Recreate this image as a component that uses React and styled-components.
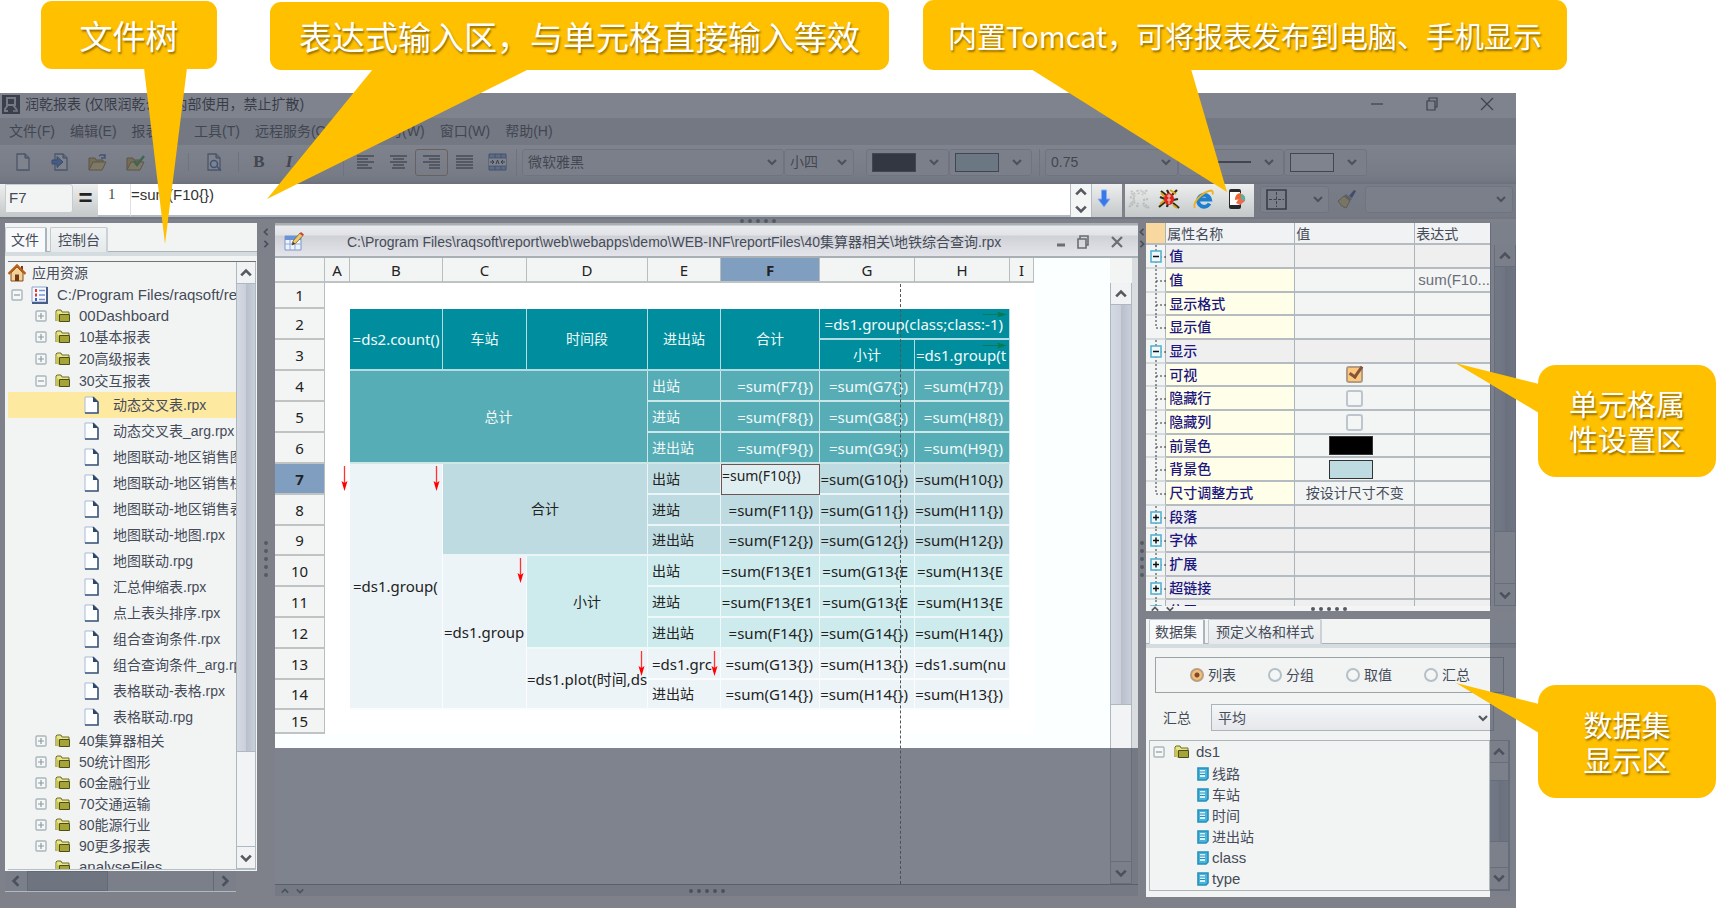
import React from 'react';
import styled, { createGlobalStyle, css } from 'styled-components';

const GlobalStyle = createGlobalStyle`
* { box-sizing: border-box; }
body {
    margin: 0;
    background: #fff;
    overflow: hidden;
    font-family: "Liberation Sans", "Noto Sans CJK SC", sans-serif;
    font-size: 14px;
    line-height: 20px;
    color: #454b58;
}
button, input, select { font: inherit; color: inherit; margin: 0; padding: 0; }
button { background: none; border: 0; }
ul { list-style: none; margin: 0; padding: 0; }
svg { display: block; flex: none; }
`

/* ---------- data ---------- */

const menus = ['文件(F)', '编辑(E)', '报表(R)', '工具(T)', '远程服务(O)', '在线学习(W)', '窗口(W)', '帮助(H)'];

const topFolders = ['10基本报表', '20高级报表', '30交互报表'];
const files = [
    '动态交叉表.rpx', '动态交叉表_arg.rpx', '地图联动-地区销售图.rpx', '地图联动-地区销售柱.rpx',
    '地图联动-地区销售表.rpx', '地图联动-地图.rpx', '地图联动.rpg', '汇总伸缩表.rpx', '点上表头排序.rpx',
    '组合查询条件.rpx', '组合查询条件_arg.rpx', '表格联动-表格.rpx', '表格联动.rpg',
];
const bottomFolders = ['40集算器相关', '50统计图形', '60金融行业', '70交通运输', '80能源行业', '90更多报表'];

const columns = [
    { name: 'A', width: 25 }, { name: 'B', width: 93 }, { name: 'C', width: 84 },
    { name: 'D', width: 121 }, { name: 'E', width: 73 }, { name: 'F', width: 99 },
    { name: 'G', width: 95 }, { name: 'H', width: 95 }, { name: 'I', width: 24 },
];

const sums = (tone, label, f, g, h) => [
    { text: label, tone, align: 'left', pad: 4 },
    { text: f, tone, align: 'right', pad: 6 },
    { text: g, tone, align: 'right', pad: 6 },
    { text: h, tone, align: 'right', pad: 6 },
];

const sheet = [
    { height: 26, cells: [{ span: 7 }] },
    {
        height: 31, cells: [
            { text: '=ds2.count()', tone: 'head', rows: 2 },
            { text: '车站', tone: 'head', rows: 2 },
            { text: '时间段', tone: 'head', rows: 2 },
            { text: '进出站', tone: 'head', rows: 2 },
            { text: '合计', tone: 'head', rows: 2 },
            { text: '=ds1.group(class;class:-1)', tone: 'head', span: 2, align: 'right', pad: 6, mark: 'right' },
        ],
    },
    { height: 31, cells: [{ text: '小计', tone: 'head' }, { text: '=ds1.group(t', tone: 'head', align: 'left', pad: 1, mark: 'right' }] },
    { height: 31, cells: [{ text: '总计', tone: 'total', span: 3, rows: 3 }, ...sums('total', '出站', '=sum(F7{})', '=sum(G7{})', '=sum(H7{})')] },
    { height: 31, cells: sums('total', '进站', '=sum(F8{})', '=sum(G8{})', '=sum(H8{})') },
    { height: 31, cells: sums('total', '进出站', '=sum(F9{})', '=sum(G9{})', '=sum(H9{})') },
    {
        height: 31, mark: 'down', cells: [
            { text: '=ds1.group(', tone: 'pale', rows: 8, align: 'left', pad: 3, mark: 'down' },
            { text: '合计', tone: 'sub', span: 2, rows: 3 },
            { text: '出站', tone: 'sub', align: 'left', pad: 4 },
            { text: '=sum(F10{})', editing: true },
            { text: '=sum(G10{})', tone: 'sub', align: 'right', pad: 6 },
            { text: '=sum(H10{})', tone: 'sub', align: 'right', pad: 6 },
        ],
    },
    { height: 31, cells: sums('sub', '进站', '=sum(F11{})', '=sum(G11{})', '=sum(H11{})') },
    { height: 30, cells: sums('sub', '进出站', '=sum(F12{})', '=sum(G12{})', '=sum(H12{})') },
    {
        height: 31, cells: [
            { text: '=ds1.group', tone: 'pale', rows: 5, align: 'left', pad: 1, mark: 'down' },
            { text: '小计', tone: 'mint', rows: 3 },
            ...sums('mint', '出站', '=sum(F13{E1', '=sum(G13{E', '=sum(H13{E'),
        ],
    },
    { height: 31, cells: sums('mint', '进站', '=sum(F13{E1', '=sum(G13{E', '=sum(H13{E') },
    { height: 31, cells: sums('mint', '进出站', '=sum(F14{})', '=sum(G14{})', '=sum(H14{})') },
    {
        height: 31, cells: [
            { text: '=ds1.plot(时间,ds', tone: 'pale', rows: 2, align: 'left', pad: 0, mark: 'down' },
            { text: '=ds1.grc', tone: 'pale', align: 'left', pad: 4, mark: 'down' },
            { text: '=sum(G13{})', tone: 'pale', align: 'right', pad: 6 },
            { text: '=sum(H13{})', tone: 'pale', align: 'right', pad: 6 },
            { text: '=ds1.sum(nu', tone: 'pale', align: 'right', pad: 3 },
        ],
    },
    { height: 30, cells: sums('pale', '进出站', '=sum(G14{})', '=sum(H14{})', '=sum(H13{})') },
    { height: 24, cells: [{ span: 7 }] },
];

const properties = [
    { name: '值', kind: 'open' },
    { name: '值', kind: 'leaf', expr: 'sum(F10...' },
    { name: '显示格式', kind: 'leaf' },
    { name: '显示值', kind: 'last' },
    { name: '显示', kind: 'open' },
    { name: '可视', kind: 'leaf', check: true, checked: true },
    { name: '隐藏行', kind: 'leaf', check: true },
    { name: '隐藏列', kind: 'leaf', check: true },
    { name: '前景色', kind: 'leaf', color: '#000' },
    { name: '背景色', kind: 'leaf', color: '#bddbe0' },
    { name: '尺寸调整方式', kind: 'last', value: '按设计尺寸不变' },
    { name: '段落', kind: 'closed' },
    { name: '字体', kind: 'closed' },
    { name: '扩展', kind: 'closed' },
    { name: '超链接', kind: 'closed' },
    { name: '位置', kind: 'closed' },
];

const fields = ['线路', '车站', '时间', '进出站', 'class', 'type'];
const isLatin = (text) => /^[\x20-\x7e]+$/.test(text);

/* ---------- icons ---------- */

const Chevron = ({ up, left, right, size = 10, color = '#555a60' }) => {
    const turn = up ? 180 : left ? 90 : right ? -90 : 0;
    return (
        <svg width={size} height={size} viewBox="0 0 10 10">
            <path d="M1 3l4 4 4-4" fill="none" stroke={color} strokeWidth="2.2" transform={`rotate(${turn} 5 5)`} />
        </svg>
    )
}

const Toggle = ({ open }) => (
    <svg width="12" height="12" viewBox="0 0 12 12">
        <rect x="1" y="1" width="10" height="10" rx="1" fill="#f6f8f8" stroke="#a9b6bb" strokeWidth="1.4" />
        <path d={open ? 'M3 6h6' : 'M3 6h6M6 3v6'} stroke="#8d9ba1" strokeWidth="1.2" />
    </svg>
)

const FolderIcon = () => (
    <svg width="16" height="14" viewBox="0 0 16 14">
        <path d="M1 12V2l1-1h4l1 2h7v2" fill="#e6e58c" stroke="#6e6d24" />
        <path d="M4.5 5.500h10v7h-10z" fill="#a5a439" stroke="#4d4c1b" />
        <path d="M1 3l3 3v7l-3-2z" fill="#c5c454" />
    </svg>
)

const FileIcon = () => (
    <svg width="15" height="18" viewBox="0 0 15 18">
        <path d="M1 1h8l5 5v11H1z" fill="#fdfeff" stroke="#a9b9da" />
        <path d="M9 1l5 5v11H1" fill="none" stroke="#3f5878" strokeWidth="1.6" />
        <path d="M9 1v5h5z" fill="#2f4766" />
    </svg>
)

const FieldIcon = () => (
    <svg width="12" height="14" viewBox="0 0 12 14">
        <path d="M1 1h10v10l-2 2H1z" fill="#46b4dc" stroke="#2690ba" strokeWidth="1.6" />
        <path d="M3 3h5v7H3z" fill="#d8f1fa" />
        <path d="M3 5h5M3 7.500h5" stroke="#2690ba" />
    </svg>
)

const HomeIcon = () => (
    <svg width="18" height="18" viewBox="0 0 18 18">
        <path d="M3 9v8h12V9L9 3z" fill="#f3cf9a" stroke="#8a4b12" />
        <path d="M13 2h2v5h-2z" fill="#8a2f12" />
        <path d="M0.5 10L9 1.500l8.500 8.500" fill="none" stroke="#b4611b" strokeWidth="2.4" />
        <path d="M7 10.500h4V17H7z" fill="#6e3c10" />
    </svg>
)

const ListIcon = () => (
    <svg width="18" height="18" viewBox="0 0 18 18">
        <path d="M1 1h15v15H1z" fill="#f5f8ff" stroke="#8fa4cb" />
        <path d="M16 1v16H1" fill="none" stroke="#4a5d86" strokeWidth="2" />
        <path d="M4 3h2v3H4zM4 7.500h2v3H4z" fill="#e23b2e" />
        <path d="M4 12h2v3H4z" fill="#2d5fd0" />
        <path d="M8 4.500h6M8 9h6M8 13.500h6" stroke="#7b95cb" strokeWidth="1.4" />
    </svg>
)

const LogoIcon = () => (
    <svg width="18" height="19" viewBox="0 0 18 19">
        <path d="M0 0h18v19H0z" fill="#1b1d24" />
        <path d="M5 3h8v7H5z" fill="none" stroke="#ddd" strokeWidth="2" />
        <path d="M6 10l-3 4v2h3M11 10l4 5" fill="none" stroke="#ddd" strokeWidth="2" />
        <path d="M11 16h5" stroke="#ddd" strokeWidth="1.5" />
    </svg>
)

const SheetIcon = () => (
    <svg width="20" height="20" viewBox="0 0 20 20">
        <path d="M1 4h16v14H1z" fill="#eef4ff" stroke="#7b96c8" />
        <path d="M1 4h16v4H1z" fill="#6b93d8" />
        <path d="M1 12h16M6 8v10M11 8v10" stroke="#8fa9d8" />
        <path d="M8 13l1-4 7-8 3 2.500-7.500 8z" fill="#f0c96a" stroke="#7a6230" strokeWidth="0.8" />
        <path d="M15.500 1.500L17 0l3 2.500-1.500 1.500z" fill="#c9443a" />
        <path d="M8 13l1-3 2 1.500z" fill="#333" />
    </svg>
)

const PageIcon = ({ arrow, glass }) => (
    <svg width="18" height="18" viewBox="0 0 18 18">
        <path d="M4 1h8l4 4v12H4z" fill="#fff" stroke="#51698f" strokeWidth="1.3" />
        <path d="M12 1v4h4" fill="#9fb4d6" stroke="#2f4766" />
        {arrow && <path d="M1 7h5V3.500l6 5.500-6 5.500V11H1z" fill="#3f7ee0" stroke="#1c469e" />}
        {glass && <g fill="none" stroke="#2c5fa8" strokeWidth="1.6"><circle cx="10" cy="11" r="3.5" /><path d="M13 13.500l4 4" /></g>}
    </svg>
)

const OpenIcon = ({ check }) => (
    <svg width="20" height="19" viewBox="0 0 20 19">
        <path d="M1 17V5h6l1 2h7v3" fill="#e2b64b" stroke="#8a651a" />
        <path d="M1 17l4-8h13l-4 8z" fill="#f8dc7d" stroke="#8a651a" />
        {check
            ? <path d="M8 8l3 4 7-9" fill="none" stroke="#2c9a3d" strokeWidth="2.4" />
            : <path d="M11 3q4-3 6 1M17 1v4h-4" fill="none" stroke="#3864a8" strokeWidth="1.4" />}
    </svg>
)

const lineSets = {
    left: 'M0 2h17M0 5h11M0 8h17M0 11h11M0 14h15',
    center: 'M0 2h17M3 5h11M0 8h17M3 11h11M2 14h13',
    right: 'M0 2h17M6 5h11M0 8h17M6 11h11M6 14h11',
    justify: 'M0 2h17M0 5h17M0 8h17M0 11h17M0 14h17',
};
const AlignIcon = ({ kind }) => (
    <svg width="17" height="16" viewBox="0 0 17 16"><path d={lineSets[kind]} stroke="#444" strokeWidth="1.6" /></svg>
)

const MergeIcon = () => (
    <svg width="19" height="18" viewBox="0 0 19 18">
        <path d="M1 1h17v16H1z" fill="#8fb0e6" stroke="#39588c" />
        <path d="M1 5h17M1 13h17M7 1v4M13 1v4M7 13v4M13 13v4" stroke="#39588c" />
        <path d="M1 5.500h17v7H1z" fill="#fff" />
        <path d="M2 9h4M17 9h-4M4 7l2 2-2 2M15 7l-2 2 2 2M8 11l1.500-4 1.500 4" fill="none" stroke="#111" />
    </svg>
)

const DownArrow = () => (
    <svg width="14" height="19" viewBox="0 0 14 19">
        <path d="M4.500 1h5v9H13l-6 8-6-8h3.500z" fill="#3a78ea" stroke="#8aaef0" />
    </svg>
)

const BugIcon = ({ faded }) => (
    <svg width="22" height="22" viewBox="0 0 22 22" opacity={faded ? 0.3 : 1}>
        <path
            d="M3 3l5 4M9 2l2 4M19 2l-5 5M2 9l5 2M1 19l6-5M20 11l-5 1M21 20l-6-5M9 19l1-4"
            stroke={faded ? '#777' : '#2b2b16'} strokeWidth="2.2" strokeDasharray={faded ? '2 1' : 'none'}
        />
        <path d="M12 2l6 4M2 16l5-4M15 17l4 3M3 5l4 4" stroke={faded ? '#999' : '#d9a520'} strokeWidth="2" />
        <ellipse cx="11" cy="11" rx="5" ry="6" fill={faded ? 'none' : '#d9251d'} />
        {!faded && <path d="M9 8h4M11 6v10M9 12h4" stroke="#ffc9bd" />}
    </svg>
)

const BrowserIcon = () => (
    <svg width="21" height="21" viewBox="0 0 21 21">
        <path d="M16.500 14.500A6 6 0 1 1 17 10.500H7" fill="none" stroke="#1f7fcf" strokeWidth="3.8" />
        <path d="M2 19C-1 14 9 3 18 1.500q2.500 0 1.500 4" fill="none" stroke="#efb021" strokeWidth="1.8" />
    </svg>
)

const PhoneIcon = () => (
    <svg width="18" height="22" viewBox="0 0 18 22">
        <rect x="1" y="1" width="12" height="20" rx="2" fill="#26282c" />
        <path d="M2 4h10v13H2z" fill="#fff" />
        <path d="M13 5a6 6 0 0 0-6 7l6-1z" fill="#f0622e" />
        <path d="M8 15l6-9q4 2 3 7l-5 4z" fill="#ef6a48" />
        <path d="M13 6q5 1 4 7l-4-2z" fill="#4cb7a5" />
    </svg>
)

const GridIcon = () => (
    <svg width="21" height="21" viewBox="0 0 21 21">
        <path d="M1 1h19v19H1z" fill="none" stroke="#111" strokeWidth="1.6" />
        <path d="M10.500 3v15M3 10.500h15" stroke="#222" strokeDasharray="3 1.5" />
    </svg>
)

const BrushIcon = () => (
    <svg width="20" height="20" viewBox="0 0 20 20">
        <path d="M12 7l5-6 2 1-4 7z" fill="#2f4a9c" />
        <path d="M9 5l6 5-2 2-6-5z" fill="#888" />
        <path d="M7 7l6 5-4 7q-5-1-8-7z" fill="#e8cf76" stroke="#93783a" />
    </svg>
)

const WindowIcon = ({ kind, bold }) => (
    <svg width="14" height="14" viewBox="0 0 14 14" fill="none" stroke={bold ? '#6a6d73' : '#222'} strokeWidth={bold ? 2.2 : 1.2}>
        {kind === 'min' && <path d={bold ? 'M3 10h8' : 'M1 7h12'} strokeWidth={bold ? 3 : 1.2} />}
        {kind === 'restore' && <path d="M2 4h8v9H2zM4 4V1h8v9h-2" strokeWidth={bold ? 1.6 : 1.2} />}
        {kind === 'close' && <path d={bold ? 'M2 2l10 10M12 2L2 12' : 'M1 1l12 12M13 1L1 13'} />}
    </svg>
)

const PropertyLines = ({ kind }) => (
    <svg width="21" height="24" viewBox="0 0 21 24">
        <path d={`M10 0V${kind === 'last' ? 12 : 24}M10 12h11`} stroke="#333" strokeDasharray="2 2" fill="none" />
        {(kind === 'open' || kind === 'closed') && (
            <g>
                <rect x="5" y="6" width="10" height="11" fill="#eef8fb" stroke="#58b2d0" strokeWidth="1.6" />
                <path d={kind === 'open' ? 'M7 11.500h6' : 'M7 11.500h6M10 8.500v6'} stroke="#111" strokeWidth="1.5" />
            </g>
        )}
    </svg>
)

const Mark = ({ kind }) => (
    kind === 'down'
        ? <svg width="7" height="26" viewBox="0 0 7 26"><path d="M3.500 0v18" stroke="#f33" strokeWidth="1.3" /><path d="M0.5 15l3 2 3-2-3 10z" fill="#f00" /></svg>
        : <svg width="24" height="7" viewBox="0 0 24 7"><path d="M0 3.500h17" stroke="#0a7a55" /><path d="M14 0.5l2 3-2 3 10-3z" fill="#087a4c" /></svg>
)

/* ---------- shell ---------- */

const App = () => {
    return (
        <Page>
            <GlobalStyle />
            <Window>
                <TopBars>
                    <TitleBar>
                        <LogoIcon />
                        <AppName>润乾报表 (仅限润乾公司内部使用，禁止扩散)</AppName>
                        <WindowButton aria-label="最小化"><WindowIcon kind="min" /></WindowButton>
                        <WindowButton aria-label="还原"><WindowIcon kind="restore" /></WindowButton>
                        <WindowButton aria-label="关闭"><WindowIcon kind="close" /></WindowButton>
                    </TitleBar>
                    <MenuBar>
                        {menus.map((name) => <button key={name}>{name}</button>)}
                    </MenuBar>
                    <Toolbar />
                    <Shade />
                </TopBars>
                <FormulaBar />
                <Splitter><Dots /></Splitter>
                <Workspace>
                    <FilePanel />
                    <Gutter $width={18}><GutterMarks /></Gutter>
                    <ReportWindow />
                    <Gutter $width={8}><GutterMarks /></Gutter>
                    <RightColumn>
                        <PropertyPanel />
                        <DatasetPanel />
                    </RightColumn>
                </Workspace>
            </Window>
            <Callout text={['文件树']} left={41} top={1} width={176} height={68} points="103,67 146,67 124,243" size={33} />
            <Callout text={['表达式输入区，与单元格直接输入等效']} left={270} top={2} width={619} height={68} points="103,67 259,67 -3,197" size={33} />
            <Callout text={['内置Tomcat，可将报表发布到电脑、手机显示']} left={923} top={0} width={644} height={70} points="108,69 268,69 304,192" size={29} />
            <Callout text={['单元格属', '性设置区']} right={0} top={365} width={178} height={112} points="1,19 1,48 -83,-2" size={29} round={18} />
            <Callout text={['数据集', '显示区']} right={0} top={685} width={178} height={113} points="1,19 1,48 -82,-2" size={29} round={18} />
        </Page>
    )
}

const Callout = ({ text, points, ...place }) => (
    <CalloutBox $place={place}>
        <Pointer width="1" height="1"><polygon points={points} fill="#ffc000" /></Pointer>
        {text.map((line) => <span key={line}>{line}</span>)}
    </CalloutBox>
)

const GutterMarks = () => (
    <>
        <GutterArrows>
            <Chevron left size={8} color="#4b4f59" />
            <Chevron right size={8} color="#4b4f59" />
        </GutterArrows>
        <Dots vertical />
    </>
)

const Dots = ({ vertical }) => (
    <DotRow $vertical={vertical}><i /><i /><i /><i /><i /></DotRow>
)

const Combo = ({ label, value, width, flex }) => (
    <ComboBox $width={width} $flex={flex}>
        <select aria-label={label} defaultValue={value}><option>{value}</option></select>
        <Chevron />
    </ComboBox>
)

const ColorCombo = ({ label, color }) => (
    <ColorButton aria-label={label}>
        <Swatch $color={color} />
        <Chevron />
    </ColorButton>
)

const Toolbar = () => (
    <ToolRow>
        <ToolGroup $start={3} $pitch={38}>
            <button aria-label="新建"><PageIcon /></button>
            <button aria-label="导入"><PageIcon arrow /></button>
            <button aria-label="打开"><OpenIcon /></button>
            <button aria-label="保存"><OpenIcon check /></button>
        </ToolGroup>
        <ToolGroup $start={39} $pitch={38} $line>
            <button aria-label="预览"><PageIcon glass /></button>
        </ToolGroup>
        <ToolGroup $start={12} $pitch={30} $line>
            <Letter aria-label="加粗">B</Letter>
            <Letter aria-label="倾斜" $italic>I</Letter>
            <Letter aria-label="下划线">U</Letter>
        </ToolGroup>
        <ToolGroup $start={15} $pitch={33} $line>
            <button aria-label="左对齐"><AlignIcon kind="left" /></button>
            <button aria-label="居中"><AlignIcon kind="center" /></button>
            <Pressed aria-label="右对齐"><AlignIcon kind="right" /></Pressed>
            <button aria-label="两端对齐"><AlignIcon kind="justify" /></button>
            <button aria-label="合并单元格"><MergeIcon /></button>
        </ToolGroup>
        <ToolGroup $start={8} $line>
            <Combo label="字体" value="微软雅黑" width={262} />
            <Combo label="字号" value="小四" width={70} />
        </ToolGroup>
        <ToolGroup $start={12}>
            <ColorCombo label="前景色" color="#000" />
            <ColorCombo label="背景色" color="#bddbe0" />
        </ToolGroup>
        <ToolGroup $start={13} $line>
            <Combo label="线宽" value="0.75" width={133} />
            <LineButton aria-label="线型"><hr /><Chevron /></LineButton>
            <ColorCombo label="边框色" color="#fff" />
        </ToolGroup>
    </ToolRow>
)

const FormulaBar = () => (
    <FormulaRow>
        <CellName aria-label="单元格" defaultValue="F7" />
        <Equals>=</Equals>
        <LineNumber>1</LineNumber>
        <FormulaInput aria-label="表达式" defaultValue="=sum(F10{})" />
        <Stepper>
            <button aria-label="上一行"><Chevron up size={12} /></button>
            <button aria-label="下一行"><Chevron size={12} /></button>
        </Stepper>
        <ApplyButton aria-label="展开"><DownArrow /></ApplyButton>
        <PublishGroup>
            <button aria-label="停止"><BugIcon faded /></button>
            <button aria-label="服务"><BugIcon /></button>
            <button aria-label="浏览器"><BrowserIcon /></button>
            <button aria-label="手机"><PhoneIcon /></button>
        </PublishGroup>
        <BorderTools>
            <BorderButton aria-label="边框"><GridIcon /><Chevron /></BorderButton>
            <BrushButton aria-label="格式刷"><BrushIcon /></BrushButton>
            <Combo label="样式" value="" flex />
            <Shade />
        </BorderTools>
    </FormulaRow>
)

const FilePanel = () => (
    <LeftColumn>
        <BrightPanel>
            <Tabs>
                <Tab $active>文件</Tab>
                <Tab>控制台</Tab>
            </Tabs>
            <TreeFrame>
                <Tree>
                    <TreeRow $height={22} $indent={0} $gap={6}><HomeIcon /><span>应用资源</span></TreeRow>
                    <TreeRow $indent={3} $gap={8} $latin><Toggle open /><ListIcon /><span>C:/Program Files/raqsoft/report</span></TreeRow>
                    <FolderRow name="00Dashboard" />
                    {topFolders.map((name) => <FolderRow key={name} name={name} height={22} open={name.startsWith('30')} />)}
                    {files.map((name, i) => (
                        <TreeRow key={name} $height={26} $indent={76} $gap={14} $selected={i === 0}>
                            <FileIcon /><span>{name}</span>
                        </TreeRow>
                    ))}
                    {bottomFolders.map((name) => <FolderRow key={name} name={name} />)}
                    <FolderRow name="analyseFiles" bare />
                </Tree>
                <Scroll thumb={469} track={94} width={20} />
            </TreeFrame>
        </BrightPanel>
        <HorizontalScroll>
            <button aria-label="向左"><Chevron left size={12} /></button>
            <i />
            <b />
            <button aria-label="向右"><Chevron right size={12} /></button>
            <Shade />
        </HorizontalScroll>
    </LeftColumn>
)

const FolderRow = ({ name, height, open, bare }) => (
    <TreeRow $height={height} $indent={bare ? 47 : 27} $gap={8} $latin={isLatin(name)}>
        {!bare && <Toggle open={open} />}
        <FolderIcon />
        <span>{name}</span>
    </TreeRow>
)

const Scroll = ({ thumb, track, width }) => (
    <ScrollColumn $width={width}>
        <button aria-label="向上"><Chevron up size={12} /></button>
        <ScrollPart $grow={thumb} $fill />
        <ScrollPart $grow={track} />
        <button aria-label="向下"><Chevron size={12} /></button>
    </ScrollColumn>
)

const SheetCell = ({ cell }) => (
    cell.editing
        ? <EditingCell><input aria-label="F7" defaultValue={cell.text} /></EditingCell>
        : (
            <Cell
                $tone={cell.tone} $align={cell.align} $pad={cell.pad}
                $formula={cell.text?.startsWith('=')}
                colSpan={cell.span} rowSpan={cell.rows}
            >
                {cell.text}
                {cell.mark && <MarkSpot><Mark kind={cell.mark} /></MarkSpot>}
            </Cell>
        )
)

const ReportWindow = () => (
    <Report>
        <ReportTitle>
            <SheetIcon />
            <ReportPath>C:\Program Files\raqsoft\report\web\webapps\demo\WEB-INF\reportFiles\40集算器相关\地铁综合查询.rpx</ReportPath>
            <ReportButtons>
                <button aria-label="最小化"><WindowIcon kind="min" bold /></button>
                <button aria-label="还原"><WindowIcon kind="restore" bold /></button>
                <button aria-label="关闭"><WindowIcon kind="close" bold /></button>
            </ReportButtons>
        </ReportTitle>
        <ReportBody>
            <SheetArea>
                <Sheet>
                    <colgroup>
                        <col style={{ width: 50 }} />
                        {columns.map((c) => <col key={c.name} style={{ width: c.width }} />)}
                    </colgroup>
                    <thead>
                        <tr>
                            <ColumnHead />
                            {columns.map((c) => <ColumnHead key={c.name} scope="col" $active={c.name === 'F'}>{c.name}</ColumnHead>)}
                        </tr>
                    </thead>
                    <tbody>
                        {sheet.map((row, i) => (
                            <SheetRow key={i} $height={row.height}>
                                <RowHead scope="row" $active={i === 6}>{i + 1}</RowHead>
                                <Cell>{row.mark && <MarkSpot><Mark kind={row.mark} /></MarkSpot>}</Cell>
                                {row.cells.map((cell, n) => <SheetCell key={n} cell={cell} />)}
                                <Cell />
                            </SheetRow>
                        ))}
                    </tbody>
                </Sheet>
                <PageBreak />
            </SheetArea>
            <SheetScroll>
                <Scroll thumb={400} track={156} width={22} />
            </SheetScroll>
        </ReportBody>
        <ReportFoot>
            <Chevron up size={8} />
            <Chevron size={8} />
            <Dots />
        </ReportFoot>
        <Shade $height={148} />
    </Report>
)

const PropertyPanel = () => (
    <PropertyBox>
        <PropertyBody>
            <PropertyTable>
                <colgroup>
                    <col style={{ width: 21 }} />
                    <col style={{ width: 131 }} />
                    <col style={{ width: 121 }} />
                    <col />
                </colgroup>
                <thead>
                    <tr><th aria-label="层次" /><th>属性名称</th><th>值</th><th>表达式</th></tr>
                </thead>
                <tbody>
                    {properties.map((p, i) => (
                        <PropertyRow key={i} $group={p.kind === 'open' || p.kind === 'closed'}>
                            <td><PropertyLines kind={p.kind} /></td>
                            <th scope="row">{p.name}</th>
                            <td>
                                {p.check && <CheckBox type="checkbox" aria-label={p.name} defaultChecked={p.checked} />}
                                {p.color && <Swatch $color={p.color} $center />}
                                {p.value}
                            </td>
                            <td>{p.expr}</td>
                        </PropertyRow>
                    ))}
                </tbody>
            </PropertyTable>
            <PropertyScroll>
                <Scroll thumb={265} track={51} width={22} />
            </PropertyScroll>
        </PropertyBody>
        <PropertyFoot>
            <Chevron up size={8} />
            <Chevron size={8} />
            <Dots />
        </PropertyFoot>
        <Shade $width={26} />
    </PropertyBox>
)

const DatasetPanel = () => (
    <DatasetBox>
        <Tabs $tight>
            <Tab $active>数据集</Tab>
            <Tab>预定义格和样式</Tab>
        </Tabs>
        <RadioFrame>
            {['列表', '分组', '取值', '汇总'].map((name, i) => (
                <label key={name}><input type="radio" name="mode" defaultChecked={i === 0} />{name}</label>
            ))}
        </RadioFrame>
        <SummaryRow>
            <label htmlFor="summary">汇总</label>
            <SummarySelect>
                <select id="summary" defaultValue="平均"><option>平均</option></select>
                <Chevron />
            </SummarySelect>
        </SummaryRow>
        <FieldFrame>
            <Tree>
                <TreeRow $height={22} $indent={3} $gap={6} $latin><Toggle open /><FolderGap><FolderIcon /></FolderGap><span>ds1</span></TreeRow>
                {fields.map((name) => (
                    <TreeRow key={name} $indent={47} $gap={3} $latin={isLatin(name)}><FieldIcon /><span>{name}</span></TreeRow>
                ))}
            </Tree>
            <ScrollColumn $width={20}>
                <button aria-label="向上"><Chevron up size={12} /></button>
                <ScrollPart $grow={18} />
                <ScrollPart $grow={61} $fill />
                <ScrollPart $grow={26} />
                <button aria-label="向下"><Chevron size={12} /></button>
            </ScrollColumn>
        </FieldFrame>
        <Shade $width={26} />
    </DatasetBox>
)

/* ---------- styles ---------- */

const Page = styled.div`
position: relative;
display: flex;
height: 100vh;
padding: 93px 200px 0 0;
`

const Window = styled.div`
flex: 1;
min-width: 0;
display: flex;
flex-direction: column;
background: #7e818a;
`

const Shade = styled.div`
position: absolute;
right: 0;
bottom: 0;
width: ${(p) => (p.$width ? `${p.$width}px` : '100%')};
height: ${(p) => (p.$height ? `${p.$height}px` : '100%')};
background: rgba(73, 79, 92, 0.7);
pointer-events: none;
`

const TopBars = styled.header`
position: relative;
flex: none;
color: #333;
`

const TitleBar = styled.div`
display: flex;
align-items: center;
height: 25px;
padding: 0 2px 3px 2px;
background: #fff;
`

const AppName = styled.span`
flex: 1;
margin-left: 5px;
color: #111;
`

const WindowButton = styled.button`
display: flex;
justify-content: center;
width: 55px;
`

const MenuBar = styled.nav`
display: flex;
align-items: center;
gap: 15px;
height: 27px;
padding: 0 0 2px 9px;
background: #d6d9dd;
`

const ToolRow = styled.div`
display: flex;
align-items: center;
height: 39px;
padding-bottom: 3px;
background: linear-gradient(#fdfdfd, #e3e5e8 80%, #cfd3d8);
border-bottom: 2px solid #c2c6cc;
`

const ToolGroup = styled.div`
display: flex;
align-items: center;
margin-left: ${(p) => p.$start}px;
position: relative;
> button {
    display: flex;
    align-items: center;
    justify-content: center;
    ${(p) => p.$pitch && css`width: ${p.$pitch}px;`}
}
${(p) => p.$line && css`
&::before {
    content: '';
    position: absolute;
    left: -6px;
    top: 0;
    width: 1px;
    height: 100%;
    background: #c6c9cd;
}
`}
`

const Letter = styled.button`
font-family: "Liberation Serif", serif;
font-weight: bold;
font-size: 17px;
font-style: ${(p) => (p.$italic ? 'italic' : 'normal')};
`

const Pressed = styled.button`
height: 27px;
border: 1px solid #b78a62;
border-radius: 3px;
`

const boxed = css`
height: 27px;
border: 1px solid #c9ced4;
border-radius: 3px;
background: #f1f2f3;
`

const ComboBox = styled.div`
${boxed}
display: flex;
align-items: center;
width: ${(p) => (p.$flex ? 'auto' : `${p.$width}px`)};
flex: ${(p) => (p.$flex ? 1 : 'none')};
padding: 0 6px 0 5px;
select {
    flex: 1;
    min-width: 0;
    appearance: none;
    border: 0;
    background: none;
}
`

const ColorButton = styled.button`
${boxed}
width: 83px;
padding: 0 4px 0 0;
gap: 13px;
`

const LineButton = styled.button`
${boxed}
width: 106px;
gap: 13px;
padding-left: 3px;
hr {
    width: 60px;
    margin: 0;
    border: 0;
    border-top: 2px solid #333;
}
`

const Swatch = styled.span`
display: block;
width: 44px;
height: 19px;
margin: ${(p) => (p.$center ? '0 0 0 34px' : '0')};
border: 1px solid #333;
background: ${(p) => p.$color};
`

const FormulaRow = styled.div`
display: flex;
flex: none;
height: 33px;
padding-left: 5px;
background: linear-gradient(#eeefef, #c4c8c9);
`

const CellName = styled.input`
width: 68px;
height: 29px;
padding: 0 0 2px 3px;
font-size: 15px;
border: 1px solid #c6ccd2;
border-radius: 0 3px 3px 0;
background: #f2f4f4;
`

const Equals = styled.span`
width: 25px;
text-align: center;
line-height: 28px;
font-size: 24px;
font-weight: bold;
color: #222;
`

const LineNumber = styled.span`
width: 33px;
padding-left: 10px;
background: #fff;
border-right: 1px solid #dde1e5;
border-bottom: 2px solid #b4bbc0;
font-family: "Liberation Serif", serif;
font-size: 15px;
`

const FormulaInput = styled.input`
flex: 1;
min-width: 0;
padding: 0 0 9px 0;
border: 0;
border-bottom: 2px solid #b4bbc0;
font-size: 15px;
color: #333;
background: #fff;
`

const Stepper = styled.div`
display: flex;
flex-direction: column;
width: 22px;
border-left: 1px solid #b4bbc0;
border-right: 1px solid #b4bbc0;
background: #f4f6f6;
button {
    flex: 1;
    display: flex;
    align-items: center;
    justify-content: center;
}
`

const ApplyButton = styled.button`
width: 30px;
padding: 0 0 4px 5px;
`

const PublishGroup = styled.div`
display: flex;
width: 132px;
border-left: 3px solid #7e818a;
button {
    width: 35px;
    padding: 0 0 3px 0;
    display: flex;
    align-items: center;
    justify-content: center;
}
button:first-child { width: 28px; }
`

const BorderTools = styled.div`
position: relative;
display: flex;
align-items: center;
width: 262px;
padding: 0 3px 3px 6px;
background: linear-gradient(#e6e8ea, #dcdfe2);
`

const BorderButton = styled.button`
${boxed}
display: flex;
align-items: center;
gap: 26px;
width: 69px;
padding-left: 5px;
`

const BrushButton = styled.button`
padding: 0 8px;
`

const Splitter = styled.div`
flex: none;
display: flex;
align-items: center;
justify-content: center;
height: 6px;
border-top: 2px solid #737782;
`

const DotRow = styled.span`
display: flex;
flex-direction: ${(p) => (p.$vertical ? 'column' : 'row')};
gap: 4px;
i {
    width: 4px;
    height: 4px;
    border-radius: 2px;
    background: #555964;
}
`

const Workspace = styled.main`
flex: 1;
min-height: 0;
display: flex;
padding-left: 5px;
`

const Gutter = styled.div`
flex: none;
display: flex;
flex-direction: column;
align-items: center;
justify-content: center;
width: ${(p) => p.$width}px;
position: relative;
padding-bottom: 14px;
`

const GutterArrows = styled.span`
position: absolute;
top: 5px;
display: flex;
flex-direction: column;
gap: 4px;
`

const LeftColumn = styled.section`
flex: none;
display: flex;
flex-direction: column;
width: 252px;
padding-bottom: 16px;
`

const BrightPanel = styled.div`
flex: 1;
min-height: 0;
display: flex;
flex-direction: column;
background: #f2f4f4;
`

const Tabs = styled.div`
flex: none;
display: flex;
align-items: flex-end;
gap: 3px;
height: ${(p) => (p.$tight ? 29 : 33)}px;
padding-left: ${(p) => (p.$tight ? 3 : 0)}px;
border-bottom: 4px solid #d5dce0;
box-shadow: inset 0 -1px #a9b3b8;
`

const Tab = styled.button`
height: 25px;
padding: 0 6px 1px ${(p) => (p.$active ? 5 : 7)}px;
border: 1px solid #c3cacf;
border-bottom: 0;
border-radius: 2px 2px 0 0;
background: ${(p) => (p.$active ? '#f8f9fb' : 'linear-gradient(#f2f4f4, #e6e9ec)')};
border-right: 2px solid ${(p) => (p.$active ? '#aab4ba' : '#cbd1d6')};
`

const TreeFrame = styled.div`
flex: 1;
min-height: 0;
display: flex;
margin: 5px 1px 1px 3px;
border-top: 1px solid #6d7377;
border-bottom: 1px solid #b5bfc4;
`

const Tree = styled.ul`
flex: 1;
min-width: 0;
overflow: hidden;
`

const TreeRow = styled.li`
display: flex;
align-items: center;
gap: ${(p) => p.$gap}px;
height: ${(p) => p.$height || 21}px;
padding-left: ${(p) => p.$indent}px;
font-size: ${(p) => (p.$latin ? 15 : 14)}px;
white-space: nowrap;
background: ${(p) => (p.$selected ? '#fde9a0' : 'none')};
`

const ScrollColumn = styled.div`
flex: none;
display: flex;
flex-direction: column;
width: ${(p) => p.$width}px;
border-left: 1px solid #aeb9bf;
border-right: 1px solid #aeb9bf;
button {
    flex: none;
    display: flex;
    align-items: center;
    justify-content: center;
    height: 22px;
    background: #f0f2f3;
    border-bottom: 1px solid #aeb9bf;
}
`

const ScrollPart = styled.div`
flex: ${(p) => p.$grow} 0 0;
border-bottom: 1px solid #aeb9bf;
background: ${(p) => (p.$fill ? 'linear-gradient(90deg, #d4d9e2, #cbd0dc 48%, #b9c0cb 52%, #c9cedb)' : '#f1f3f4')};
`

const HorizontalScroll = styled.div`
position: relative;
display: flex;
width: 231px;
height: 21px;
background: #f1f2f3;
border-bottom: 1px solid #aeb9bf;
button {
    width: 22px;
    display: flex;
    align-items: center;
    justify-content: center;
}
i {
    flex: 80;
    background: #c9ced6;
    border: 1px solid #a0a8b0;
}
b { flex: 106; border-right: 1px solid #a0a8b0; }
`

const Report = styled.section`
position: relative;
flex: 1;
min-width: 0;
display: flex;
flex-direction: column;
margin-bottom: 12px;
background: #d9dde0;
`

const ReportTitle = styled.div`
flex: none;
display: flex;
align-items: center;
height: 35px;
padding: 4px 14px 0 9px;
background: linear-gradient(#a9b0b4 2px, #eaebee 3px, #e2e3e6 12px, #cfd1d6 13px, #e4e5ea);
border-bottom: 2px solid #a9b0b4;
`

const ReportPath = styled.span`
flex: 1;
min-width: 0;
padding-left: 43px;
overflow: hidden;
white-space: nowrap;
`

const ReportButtons = styled.span`
display: flex;
button { padding: 0 4px; }
button:last-child { padding: 0 0 0 16px; }
`

const ReportBody = styled.div`
flex: 1;
min-height: 0;
display: flex;
padding-right: 6px;
`

const SheetArea = styled.div`
position: relative;
flex: 1;
min-width: 0;
overflow: hidden;
background: #fbffff;
`

const Sheet = styled.table`
width: 759px;
table-layout: fixed;
border-collapse: separate;
border-spacing: 0;
background: #fff;
font-family: "Noto Sans", "Noto Sans CJK SC", sans-serif;
color: #222;
`

const headCell = css`
padding: 0;
font-weight: ${(p) => (p.$active ? 'bold' : 'normal')};
font-size: 15px;
border-right: 1px solid #b9bdbd;
border-bottom: 2px solid #c0c3c3;
background: ${(p) => (p.$active ? '#809fc0' : '#f3f5f4')};
`

const ColumnHead = styled.th`
${headCell}
height: 25px;
`

const RowHead = styled.th`
${headCell}
`

const SheetRow = styled.tr`
height: ${(p) => p.$height}px;
`

const tones = {
    head: '#008e9e',
    total: '#57adb6',
    sub: '#bddbe0',
    mint: '#cdebec',
    pale: '#edf4f7',
};

const sidePadding = { left: 'padding-left', right: 'padding-right' };

const Cell = styled.td`
position: relative;
padding: 0;
${(p) => p.$align && `${sidePadding[p.$align]}: ${p.$pad}px;`}
overflow: hidden;
white-space: nowrap;
font-size: ${(p) => (p.$formula ? 15 : 14)}px;
text-align: ${(p) => p.$align || 'center'};
background: ${(p) => tones[p.$tone] || 'none'};
color: ${(p) => (p.$tone === 'head' || p.$tone === 'total' ? '#f2fafa' : '#222')};
${(p) => p.$tone && css`
border-right: 1px solid rgba(255, 255, 255, 0.7);
border-bottom: 2px solid rgba(255, 255, 255, 0.7);
`}
`

const EditingCell = styled.td`
padding: 0;
border: 1px solid #6e5551;
background: #dfeef1;
input {
    display: block;
    width: 100%;
    height: 20px;
    margin-bottom: 8px;
    border: 0;
    background: none;
}
`

const MarkSpot = styled.span`
position: absolute;
top: 2px;
right: 2px;
`

const PageBreak = styled.div`
position: absolute;
top: 26px;
bottom: 0;
left: 625px;
border-left: 1px dashed #555;
`

const SheetScroll = styled.div`
display: flex;
padding-top: 25px;
background: #f3f5f4;
`

const ReportFoot = styled.div`
position: relative;
flex: none;
display: flex;
align-items: center;
gap: 7px;
height: 12px;
padding-left: 6px;
border-top: 1px solid #888;
> span {
    position: absolute;
    left: 50%;
    transform: translateX(-50%);
}
`

const RightColumn = styled.aside`
flex: none;
display: flex;
flex-direction: column;
gap: 8px;
width: 370px;
padding-bottom: 11px;
`

const PropertyBox = styled.section`
position: relative;
flex: 1;
min-height: 0;
display: flex;
flex-direction: column;
background: #f3f5f5;
`

const PropertyBody = styled.div`
flex: 1;
min-height: 0;
display: flex;
overflow: hidden;
`

const PropertyTable = styled.table`
flex: 1;
align-self: flex-start;
table-layout: fixed;
border-collapse: separate;
border-spacing: 0;
td, th {
    padding: 0;
    height: 22px;
    line-height: 18px;
    font-weight: normal;
    text-align: left;
    white-space: nowrap;
    border-right: 1px solid #aab4b9;
    border-bottom: 2px solid #b4bcc1;
}
thead th { padding: 2px 0 0 1px; background: #f0f2f3; }
thead th:first-child { background: #f9d8a0; }
`

const PropertyRow = styled.tr`
background: ${(p) => (p.$group ? '#efefef' : '#f3f5f5')};
td, th { height: 24px; }
&:nth-child(3n) td, &:nth-child(3n) th { height: 23px; }
td:first-child { position: relative; background: #f3f5f5; border-bottom-color: #d5dadd; }
td:first-child svg { position: absolute; top: 0; left: 0; }
tbody & th {
    padding-left: 3px;
    color: #1c1680;
    font-weight: 500;
    background: ${(p) => (p.$group ? '#efefef' : '#fffee9')};
}
td:nth-child(3) { text-align: center; }
td:nth-child(4) { padding-left: 3px; font-size: 15px; color: #6a6e78; }
`

const CheckBox = styled.input`
appearance: none;
position: relative;
display: block;
width: 17px;
height: 17px;
margin: 0 auto;
border: 2px solid #bcc6cc;
border-radius: 3px;
background: #f4f6f6;
&:checked {
    border-color: #b39b85;
    background: #fdc77c;
}
&:checked::after {
    content: '';
    position: absolute;
    left: 4px;
    top: -4px;
    width: 5px;
    height: 11px;
    border: solid #85543a;
    border-width: 0 3px 3px 0;
    transform: rotate(35deg);
}
`

const PropertyScroll = styled.div`
display: flex;
padding-top: 22px;
margin-left: 3px;
`

const PropertyFoot = styled.div`
position: relative;
flex: none;
display: flex;
align-items: center;
gap: 7px;
height: 5px;
padding-left: 5px;
> span {
    position: absolute;
    left: 165px;
    top: 1px;
}
`

const DatasetBox = styled.section`
position: relative;
flex: none;
height: 278px;
display: flex;
flex-direction: column;
background: #f2f4f4;
`

const RadioFrame = styled.div`
flex: none;
display: flex;
align-items: center;
height: 36px;
margin: 9px 12px 0 9px;
padding-left: 34px;
border: 1px solid #9ba3a6;
label {
    display: flex;
    align-items: center;
    gap: 4px;
    width: 78px;
}
input {
    appearance: none;
    width: 14px;
    height: 14px;
    border: 2px solid #b4c0c7;
    border-radius: 50%;
    background: #f4f6f6;
}
input:checked {
    border-color: #b99f83;
    background: radial-gradient(#7c4a2d 2px, #f7bd76 3px);
}
`

const SummaryRow = styled.div`
flex: none;
display: flex;
align-items: center;
gap: 20px;
margin: 11px 22px 0 17px;
`

const SummarySelect = styled.div`
flex: 1;
display: flex;
align-items: center;
height: 27px;
padding: 0 5px 0 6px;
border: 1px solid #aab4bb;
background: linear-gradient(#f5f6f8, #eceef1 50%, #e6e8ec);
select {
    flex: 1;
    appearance: none;
    border: 0;
    background: none;
}
`

const FieldFrame = styled.div`
flex: 1;
min-height: 0;
display: flex;
margin: 9px 6px 6px 3px;
border: 1px solid #aab4b9;
`

const FolderGap = styled.span`
padding-left: 3px;
`

const CalloutBox = styled.div`
position: absolute;
display: flex;
flex-direction: column;
align-items: center;
justify-content: center;
top: ${(p) => p.$place.top}px;
${(p) => (p.$place.right === undefined ? `left: ${p.$place.left}px;` : `right: ${p.$place.right}px;`)}
width: ${(p) => p.$place.width}px;
height: ${(p) => p.$place.height}px;
border-radius: ${(p) => p.$place.round || 11}px;
background: #ffc000;
color: #fff;
font-family: "Noto Sans CJK SC", sans-serif;
font-size: ${(p) => p.$place.size}px;
line-height: 35px;
white-space: nowrap;
text-shadow: 1px 2px 2px rgba(60, 40, 0, 0.55);
`

const Pointer = styled.svg`
position: absolute;
left: 0;
top: 0;
overflow: visible;
`

export default App;
